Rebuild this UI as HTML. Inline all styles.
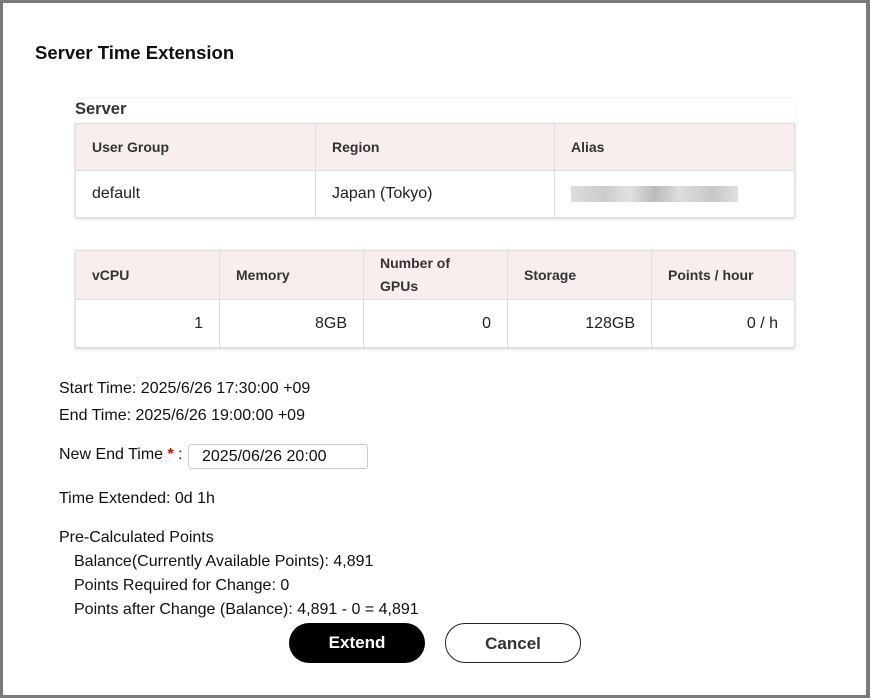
<!DOCTYPE html>
<html><head><meta charset="utf-8"><style>
*{margin:0;padding:0;box-sizing:border-box}
body{width:870px;height:698px;background:#7a7a7a;font-family:"Liberation Sans",Arial,sans-serif;position:relative;overflow:hidden;color:#111}
.dlg{position:absolute;left:3px;top:3px;width:863px;height:692px;background:#fff}
.abs{position:absolute}
h1{position:absolute;left:32px;top:39px;font-size:18.5px;font-weight:bold;color:#111}
table{border-collapse:collapse;position:absolute;font-size:16px;box-shadow:0 1px 3px rgba(0,0,0,.18)}
td{border:1px solid #ddd;padding:0 16px;color:#222}
tr.h td{background:#f9eeee;font-weight:bold;color:#333;font-size:14px}
.r{text-align:right}
.t{position:absolute;font-size:16px;color:#111}
.btn{position:absolute;top:620px;width:136px;height:40px;border-radius:20px;font-size:17px;font-weight:bold;text-align:center;line-height:39px}
</style></head><body>
<div class="dlg">
<h1>Server Time Extension</h1>
<div class="abs" style="left:72px;top:96px;width:720px;height:25px;box-shadow:0 -1px 2px rgba(0,0,0,.06)"></div>
<div class="abs" style="left:72px;top:97px;font-size:16.5px;font-weight:bold;color:#333">Server</div>
<table style="left:72px;top:120px;width:720px">
<tr class="h" style="height:47px"><td style="width:240px">User Group</td><td style="width:239px">Region</td><td>Alias</td></tr>
<tr style="height:47px"><td>default</td><td>Japan (Tokyo)</td><td><div style="width:167px;height:16px;background:linear-gradient(90deg,#ddd,#ccc 20%,#e2e2e2 35%,#bbb 50%,#ddd 65%,#c8c8c8 85%,#e0e0e0)"></div></td></tr>
</table>
<table style="left:72px;top:247px;width:720px">
<tr class="h" style="height:49px"><td style="width:144px">vCPU</td><td style="width:144px">Memory</td><td style="width:144px;line-height:23px">Number of<br>GPUs</td><td style="width:144px">Storage</td><td>Points / hour</td></tr>
<tr style="height:48px"><td class="r">1</td><td class="r">8GB</td><td class="r">0</td><td class="r">128GB</td><td class="r">0 / h</td></tr>
</table>
<div class="t" style="left:56px;top:377px">Start Time: 2025/6/26 17:30:00 +09</div>
<div class="t" style="left:56px;top:404px">End Time: 2025/6/26 19:00:00 +09</div>
<div class="t" style="left:56px;top:443px">New End Time <span style="color:#e00;font-weight:bold">*</span> :</div>
<div class="abs" style="left:185px;top:441px;width:180px;height:25px;border:1px solid #ccc;border-radius:3px;font-size:16px;padding:3px 0 0 13px;color:#111">2025/06/26 20:00</div>
<div class="t" style="left:56px;top:487px">Time Extended: 0d 1h</div>
<div class="t" style="left:56px;top:526px">Pre-Calculated Points</div>
<div class="t" style="left:71px;top:550px">Balance(Currently Available Points): 4,891</div>
<div class="t" style="left:71px;top:574px">Points Required for Change: 0</div>
<div class="t" style="left:71px;top:598px">Points after Change (Balance): 4,891 - 0 = 4,891</div>
<div class="btn" style="left:286px;background:#000;color:#fff">Extend</div>
<div class="btn" style="left:442px;border:1px solid #222;color:#333">Cancel</div>
</div>
</body></html>
